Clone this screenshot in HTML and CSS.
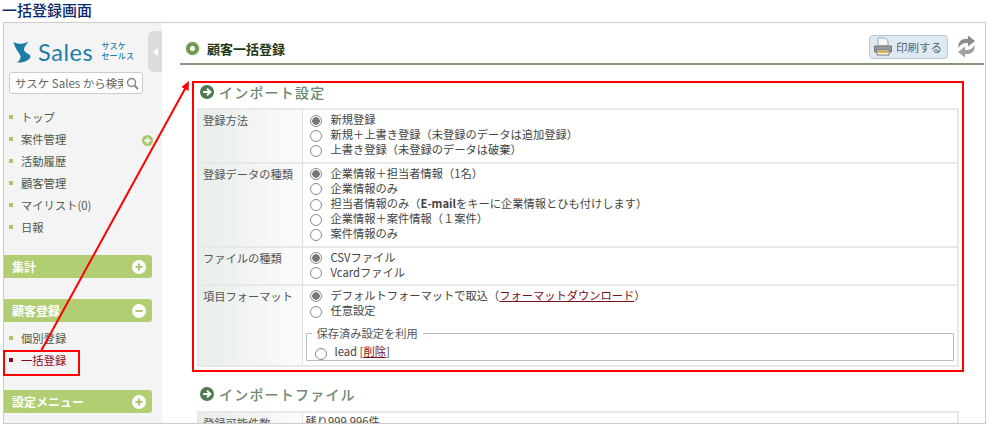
FILE: index.html
```html
<!DOCTYPE html>
<html lang="ja">
<head>
<meta charset="utf-8">
<title>一括登録画面</title>
<link rel="stylesheet" href="styles.css">
</head>
<body>
<h1 class="page-title">一括登録画面</h1>
<div class="frame">
  <aside class="sidebar">
    <div class="brand">
      <svg class="brand-mark" width="18" height="22" viewBox="0 0 18 22"><path d="M0.500 1 C5 3.500 10 3.500 15.500 0.500 C13 4 11 6 11 8.500 C11 12 17.500 12.500 17.500 16 C15.500 20 10 22 4 21.500 C7.500 19 8.500 16 6.500 13 C4.500 10 1.500 6 0.500 1 Z" fill="#1b7da6"/></svg>
      <span class="brand-name">Sales</span>
      <span class="brand-sub">サスケ<br>セールス</span>
      <span class="collapse-tab"><i class="collapse-arrow"></i></span>
    </div>
    <div class="search">
      <span class="search-text">サスケ Sales から検索</span>
      <svg class="search-icon" width="13" height="13" viewBox="0 0 13 13"><circle cx="5.500" cy="5.500" r="4" fill="none" stroke="#888" stroke-width="1.400"/><path d="M8.500 8.500 L12 12" stroke="#888" stroke-width="1.800"/></svg>
    </div>
    <ul class="menu menu-top">
      <li>トップ</li>
      <li>案件管理<svg class="menu-plus" width="11" height="11" viewBox="0 0 11 11"><circle cx="5.500" cy="5.500" r="5.500" fill="#a9c86a"/><path d="M5.500 2.500 V8.500 M2.500 5.500 H8.500" stroke="#fff" stroke-width="1.800"/></svg></li>
      <li>活動履歴</li>
      <li>顧客管理</li>
      <li>マイリスト(0)</li>
      <li>日報</li>
    </ul>
    <div class="bar bar-first">集計<svg width="14" height="14" viewBox="0 0 14 14"><circle cx="7" cy="7" r="7" fill="#fff"/><path d="M7 3.500 V10.500 M3.500 7 H10.500" stroke="#a9c86a" stroke-width="2"/></svg></div>
    <div class="bar bar-second">顧客登録<svg width="14" height="14" viewBox="0 0 14 14"><circle cx="7" cy="7" r="7" fill="#fff"/><path d="M3.500 7 H10.500" stroke="#a9c86a" stroke-width="2"/></svg></div>
    <ul class="menu menu-sub">
      <li>個別登録</li>
      <li class="current">一括登録</li>
    </ul>
    <div class="bar bar-third">設定メニュー<svg width="14" height="14" viewBox="0 0 14 14"><circle cx="7" cy="7" r="7" fill="#fff"/><path d="M7 3.500 V10.500 M3.500 7 H10.500" stroke="#a9c86a" stroke-width="2"/></svg></div>
  </aside>
  <main class="content">
    <header class="content-head">
      <span class="head-dot"></span>
      <h2 class="head-title">顧客一括登録</h2>
      <button class="print-btn">
        <svg width="20" height="20" viewBox="0 0 20 20"><path d="M5 1 H12 L15 4 V9 H5 Z" fill="#f4f7fa" stroke="#9aa9b8"/><path d="M1.500 9 H18.500 V15 H1.500 Z" fill="#9a9a9a" stroke="#777"/><path d="M4 13 H16 V18 H4 Z" fill="#fff" stroke="#777"/><path d="M5 15 H15" stroke="#d9b23c" stroke-width="2"/></svg>
        <span>印刷する</span>
      </button>
      <svg class="refresh" width="19" height="23" viewBox="0 0 19 23"><path d="M1.500 13 C0.500 7 5 3 11 4 L11 0.500 L18 6 L11 11.500 L11 8 C7 7.500 3.500 9 1.500 13 Z" fill="#8b8b8b"/><path d="M17.500 10 C18.500 16 14 20 8 19 L8 22.500 L1 17 L8 11.500 L8 15 C12 15.500 15.500 14 17.500 10 Z" fill="#a0a0a0"/></svg>
    </header>

    <h3 class="section-title section-first"><svg width="14" height="14" viewBox="0 0 14 14"><circle cx="7" cy="7" r="7" fill="#4d7a50"/><path d="M3 7 H10 M7 3.800 L10.400 7 L7 10.200" fill="none" stroke="#fff" stroke-width="2"/></svg>インポート設定</h3>
    <table class="form-table">
      <tr>
        <th>登録方法</th>
        <td>
          <label class="opt"><input type="radio" name="a" checked>新規登録</label>
          <label class="opt"><input type="radio" name="a">新規＋上書き登録（未登録のデータは追加登録）</label>
          <label class="opt"><input type="radio" name="a">上書き登録（未登録のデータは破棄）</label>
        </td>
      </tr>
      <tr>
        <th>登録データの種類</th>
        <td>
          <label class="opt"><input type="radio" name="b" checked>企業情報＋担当者情報（1名）</label>
          <label class="opt"><input type="radio" name="b">企業情報のみ</label>
          <label class="opt"><input type="radio" name="b">担当者情報のみ（<b>E-mail</b>をキーに企業情報とひも付けします）</label>
          <label class="opt"><input type="radio" name="b">企業情報＋案件情報（１案件）</label>
          <label class="opt"><input type="radio" name="b">案件情報のみ</label>
        </td>
      </tr>
      <tr>
        <th>ファイルの種類</th>
        <td>
          <label class="opt"><input type="radio" name="c" checked>CSVファイル</label>
          <label class="opt"><input type="radio" name="c">Vcardファイル</label>
        </td>
      </tr>
      <tr>
        <th>項目フォーマット</th>
        <td class="cell-format">
          <label class="opt"><input type="radio" name="d" checked>デフォルトフォーマットで取込（<a href="#">フォーマットダウンロード</a>）</label>
          <label class="opt"><input type="radio" name="d">任意設定</label>
          <fieldset class="saved">
            <legend>保存済み設定を利用</legend>
            <label class="opt opt-saved"><input type="radio" name="d">lead [<a href="#">削除</a>]</label>
          </fieldset>
        </td>
      </tr>
    </table>

    <h3 class="section-title section-second"><svg width="14" height="14" viewBox="0 0 14 14"><circle cx="7" cy="7" r="7" fill="#4d7a50"/><path d="M3 7 H10 M7 3.800 L10.400 7 L7 10.200" fill="none" stroke="#fff" stroke-width="2"/></svg>インポートファイル</h3>
    <table class="form-table">
      <tr>
        <th>登録可能件数</th>
        <td class="cell-plain">残り999,996件</td>
      </tr>
    </table>
  </main>
</div>

<div class="mark-box mark-main"></div>
<div class="mark-box mark-side"></div>
<svg class="mark-arrow" width="989" height="428" viewBox="0 0 989 428">
  <path d="M41 351 L186 87" stroke="#f00" stroke-width="2" fill="none"/>
  <path d="M189 81 L181.500 87 L188.500 91 Z" fill="#f00"/>
</svg>
</body>
</html>
```

FILE: styles.css
```css
* { box-sizing: border-box; }
html, body { margin: 0; padding: 0; }
body {
  width: 989px;
  height: 428px;
  overflow: hidden;
  background: #fff;
  color: #444;
  font-family: "Noto Sans CJK JP", "Noto Sans", sans-serif;
  font-size: 11.250px;
  position: relative;
}
.page-title {
  margin: 0;
  height: 22px;
  padding-left: 2px;
  font-size: 15px;
  line-height: 20px;
  font-weight: 500;
  color: #0a2a6b;
}
.frame {
  display: flex;
  width: 983px;
  height: 402px;
  margin-left: 3px;
  border: 1px solid #ccc;
  overflow: hidden;
}
.sidebar {
  flex: 0 0 158px;
  background: #f4f4f4;
  display: flex;
  flex-direction: column;
}
.brand {
  position: relative;
  height: 49px;
  padding: 17px 0 0 9px;
  display: flex;
  align-items: flex-start;
  gap: 7px;
}
.brand-mark { flex: none; margin-top: 1px; }
.brand-name {
  font-family: "Lato", sans-serif;
  font-size: 23.500px;
  line-height: 25px;
  font-weight: 400;
  letter-spacing: 0.600px;
  color: #1b7da6;
}
.brand-sub {
  margin: 1px 0 0 1px;
  font-size: 8px;
  line-height: 10px;
  font-weight: 500;
  letter-spacing: 0.200px;
  color: #1b7da6;
}
.collapse-tab {
  position: absolute;
  left: 144px;
  top: 8px;
  width: 14px;
  height: 41px;
  background: #dcdcdc;
  border-radius: 6px 0 0 6px;
  display: flex;
  align-items: center;
  justify-content: center;
}
.collapse-arrow {
  width: 0;
  height: 0;
  border-style: solid;
  border-width: 4px 5px 4px 0;
  border-color: transparent #fff transparent transparent;
}
.search {
  margin-left: 5px;
  width: 134px;
  height: 22px;
  background: #fff;
  border: 1px solid #ccc;
  border-radius: 3px;
  display: flex;
  align-items: center;
  padding: 0 1px 0 5px;
  gap: 3px;
}
.search-text {
  flex: 0 0 108px;
  overflow: hidden;
  white-space: nowrap;
  font-size: 11.500px;
  color: #666;
}
.search-icon { flex: none; }
.menu {
  list-style: none;
  margin: 0;
  padding: 0;
  font-size: 11.300px;
  color: #4f5a4a;
}
.menu li {
  position: relative;
  height: 22px;
  line-height: 22px;
  padding-left: 17px;
}
.menu li::before {
  content: "";
  position: absolute;
  left: 5px;
  top: 9px;
  width: 4px;
  height: 4px;
  background: #a9c86a;
}
.menu-top { margin-top: 12px; }
.menu-plus { position: absolute; left: 138px; top: 7px; }
.menu .current { color: #8b0a1a; }
.menu .current::before { background: #8b0a1a; }
.menu-sub { margin-top: 5px; }
.bar {
  width: 148px;
  height: 23px;
  background: #b1cf72;
  border-radius: 0 3px 3px 0;
  display: flex;
  align-items: center;
  justify-content: space-between;
  padding: 0 6px 0 8px;
  color: #fff;
  font-size: 12px;
  font-weight: 700;
}
.bar-first { margin-top: 17px; }
.bar-second { margin-top: 21px; }
.bar-third { margin-top: 19px; }
.content {
  flex: 1;
  min-width: 0;
  padding: 0 0 0 15px;
}
.content-head {
  height: 42px;
  margin: 0 1px 0 3px;
  padding: 12px 8px 0 6px;
  border-bottom: 2px solid #83957b;
  display: flex;
  align-items: flex-start;
}
.head-dot {
  flex: none;
  width: 13px;
  height: 13px;
  margin-top: 7px;
  border-radius: 50%;
  border: 4px solid #6f9a50;
  background: #fff;
  box-shadow: 0 0 2px #a9c28e;
}
.head-title {
  margin: 3px 0 0 8px;
  font-size: 13px;
  line-height: 21px;
  font-weight: 700;
  color: #1f3a1a;
  flex: 1;
}
.print-btn {
  flex: none;
  width: 79px;
  height: 24px;
  margin: 0;
  padding: 0 0 0 3px;
  display: flex;
  align-items: center;
  gap: 3px;
  border: 1px solid #b6c8d6;
  border-radius: 4px;
  background: #dfe9f1;
  color: #56687a;
  font-family: inherit;
  font-size: 11.500px;
}
.refresh { flex: none; margin: 0 0 0 9px; }
.section-title {
  margin: 0 0 0 23px;
  display: flex;
  align-items: center;
  gap: 5px;
  font-size: 14px;
  line-height: 20px;
  font-weight: 500;
  letter-spacing: 1.200px;
  color: #6b8a70;
}
.section-title svg { flex: none; }
.section-first { margin-top: 17px; }
.section-second { margin-top: 17px; }
.form-table {
  width: 762px;
  margin: 7px 0 0 20px;
  border-collapse: collapse;
  table-layout: fixed;
  border: 2px solid #e8e8e8;
}
.section-first + .form-table { margin-top: 6px; }
.form-table tr + tr { border-top: 2px solid #e8e8e8; }
.form-table th {
  width: 104px;
  padding: 2px 0 0 4px;
  vertical-align: top;
  text-align: left;
  font-weight: 400;
  font-size: 11.250px;
  line-height: 16px;
  color: #555;
  background: linear-gradient(90deg, #e8eeea, #fbfbfb);
  border-right: 1px solid #e0e0e0;
}
.form-table td {
  padding: 2px 0 4px 7px;
  vertical-align: top;
}
.form-table .cell-plain { line-height: 15px; color: #444; padding: 1px 0 0 3px; }
.opt {
  display: flex;
  align-items: center;
  height: 15.200px;
  white-space: nowrap;
  color: #444;
  line-height: 15px;
}
.opt input {
  appearance: none;
  flex: none;
  width: 12px;
  height: 12px;
  margin: 2px 9px 0 0;
  border: 1px solid #8a8a8a;
  border-radius: 50%;
  background: #fff;
  position: relative;
}
.opt input:checked {
  background: radial-gradient(circle, #777 0, #777 3.500px, #fff 4px);
}
.opt b { font-weight: 700; }
.opt a { color: #7b1020; }
.saved {
  margin: 8px 3px 0 -4px;
  padding: 0 0 0 8px;
  height: 35px;
  border: 1px solid #bbb;
  border-radius: 1px;
}
.saved legend {
  margin-left: -3px;
  padding: 0 5px;
  line-height: 14px;
  font-size: 11.250px;
  color: #555;
}
.opt-saved { margin-top: 4px; }
.opt-saved input { margin-right: 8px; margin-top: 5px; }
.mark-box {
  position: absolute;
  border: 2px solid #f00;
}
.mark-main { left: 192px; top: 81px; width: 772px; height: 291px; }
.mark-side { left: 3px; top: 350px; width: 77px; height: 26px; }
.mark-arrow { position: absolute; left: 0; top: 0; pointer-events: none; }
```
